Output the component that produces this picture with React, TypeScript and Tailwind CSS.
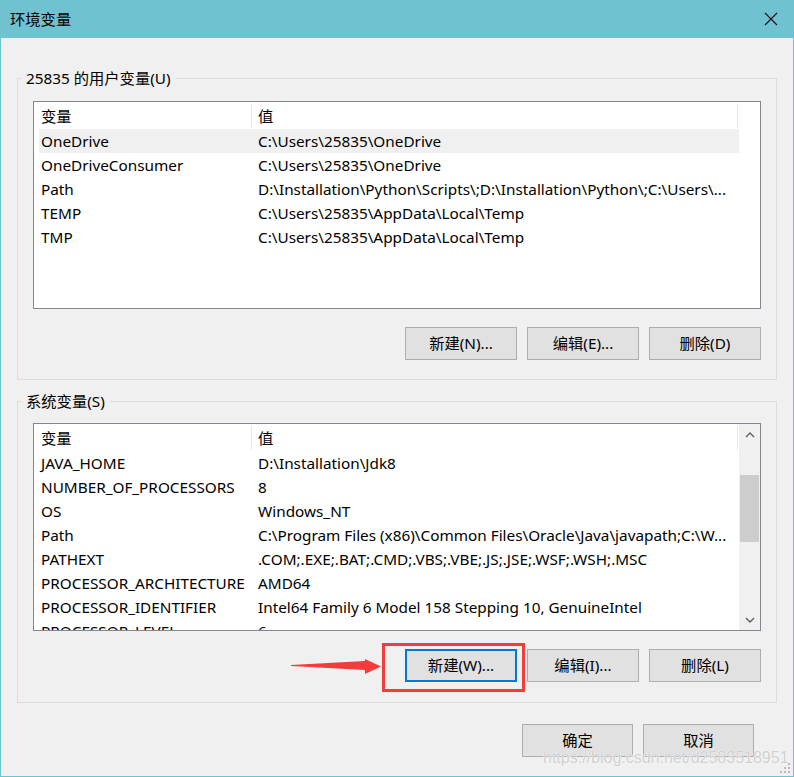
import React from "react";

type Row = { name: string; value: string; selected?: boolean };

const userVars: Row[] = [
  { name: "OneDrive", value: "C:\\Users\\25835\\OneDrive", selected: true },
  { name: "OneDriveConsumer", value: "C:\\Users\\25835\\OneDrive" },
  {
    name: "Path",
    value: "D:\\Installation\\Python\\Scripts\\;D:\\Installation\\Python\\;C:\\Users\\...",
  },
  { name: "TEMP", value: "C:\\Users\\25835\\AppData\\Local\\Temp" },
  { name: "TMP", value: "C:\\Users\\25835\\AppData\\Local\\Temp" },
];

const systemVars: Row[] = [
  { name: "JAVA_HOME", value: "D:\\Installation\\Jdk8" },
  { name: "NUMBER_OF_PROCESSORS", value: "8" },
  { name: "OS", value: "Windows_NT" },
  {
    name: "Path",
    value: "C:\\Program Files (x86)\\Common Files\\Oracle\\Java\\javapath;C:\\W...",
  },
  { name: "PATHEXT", value: ".COM;.EXE;.BAT;.CMD;.VBS;.VBE;.JS;.JSE;.WSF;.WSH;.MSC" },
  { name: "PROCESSOR_ARCHITECTURE", value: "AMD64" },
  { name: "PROCESSOR_IDENTIFIER", value: "Intel64 Family 6 Model 158 Stepping 10, GenuineIntel" },
  { name: "PROCESSOR_LEVEL", value: "6" },
];

function Header() {
  return (
    <div className="flex h-[27px] shrink-0 items-center bg-white">
      <div className="w-[217px] shrink-0 pl-[7px]">变量</div>
      <div className="flex h-[24px] w-[487px] shrink-0 items-center border-x border-[#e5e5e5] pl-[6px]">
        值
      </div>
    </div>
  );
}

function VarRows({ rows }: { rows: Row[] }) {
  return (
    <div className="flex flex-col">
      {rows.map((r) => (
        <div
          key={r.name}
          className={`ml-[5px] flex h-[24px] w-[700px] shrink-0 items-center whitespace-nowrap ${
            r.selected ? "bg-[#f0f0f0]" : ""
          }`}
        >
          <div className="w-[212px] shrink-0 overflow-hidden pl-[2px]">{r.name}</div>
          <div className="flex-1 overflow-hidden pl-[7px]">{r.value}</div>
        </div>
      ))}
    </div>
  );
}

function Chevron({ down }: { down?: boolean }) {
  return (
    <svg width="10" height="6" viewBox="0 0 10 6">
      <path
        d={down ? "M1 1 L5 5 L9 1" : "M1 5 L5 1 L9 5"}
        fill="none"
        stroke="#606060"
        strokeWidth="1.4"
      />
    </svg>
  );
}

function Button({
  children,
  focused,
  wide,
}: {
  children: React.ReactNode;
  focused?: boolean;
  wide?: boolean;
}) {
  return (
    <button
      className={`flex h-[33px] items-center justify-center bg-[#e1e1e1] pb-px ${
        wide ? "w-[112px]" : "w-[111px]"
      } ${focused ? "border-2 border-[#0078d7]" : "border border-[#adadad]"}`}
    >
      {children}
    </button>
  );
}

export default function App() {
  return (
    <div className="relative flex h-[777px] w-[794px] flex-col border-x border-b border-[#71c2d1] bg-[#f0f0f0] font-['Noto_Sans','Noto_Sans_CJK_SC',sans-serif] text-[15.3px] leading-[20px] text-black">
      {/* title bar */}
      <div className="flex h-[38px] shrink-0 items-center justify-between bg-[#71c2d1] pl-[9px] pr-[15px]">
        <span>环境变量</span>
        <svg width="14" height="14" viewBox="0 0 14 14">
          <path d="M1 1 L13 13 M13 1 L1 13" stroke="#111" strokeWidth="1.1" />
        </svg>
      </div>

      <div className="flex flex-col px-[16px]">
        {/* user variables */}
        <fieldset className="mt-[30px] border border-[#dcdcdc] px-[15px] pb-[19px] pt-[13px]">
          <legend className="ml-[-12px] px-[5px] leading-[20px]">25835 的用户变量(U)</legend>
          <div className="flex h-[208px] flex-col overflow-hidden border border-[#828790] bg-white">
            <Header />
            <VarRows rows={userVars} />
          </div>
          <div className="mt-[18px] flex justify-end gap-[10px]">
            <Button wide>新建(N)...</Button>
            <Button wide>编辑(E)...</Button>
            <Button wide>删除(D)</Button>
          </div>
        </fieldset>

        {/* system variables */}
        <fieldset className="mt-[11px] border border-[#dcdcdc] px-[15px] pb-[20px] pt-[12px]">
          <legend className="ml-[-12px] px-[5px] leading-[20px]">系统变量(S)</legend>
          <div className="flex h-[208px] overflow-hidden border border-[#828790] bg-white">
            <div className="flex w-[705px] shrink-0 flex-col overflow-hidden">
              <Header />
              <VarRows rows={systemVars} />
            </div>
            <div className="flex w-[21px] flex-col bg-[#f0f0f0]">
              <div className="flex h-[21px] items-center justify-center">
                <Chevron />
              </div>
              <div className="flex-1 px-px pt-[30px]">
                <div className="h-[67px] bg-[#cdcdcd]" />
              </div>
              <div className="flex h-[21px] items-center justify-center">
                <Chevron down />
              </div>
            </div>
          </div>
          <div className="mt-[18px] flex justify-end gap-[10px]">
            <Button wide focused>
              新建(W)...
            </Button>
            <Button wide>编辑(I)...</Button>
            <Button wide>删除(L)</Button>
          </div>
        </fieldset>

        <div className="mr-[23px] mt-[21px] flex justify-end gap-[10px]">
          <Button>确定</Button>
          <Button>取消</Button>
        </div>
      </div>

      {/* annotation: red highlight and arrow */}
      <div className="absolute left-[381px] top-[643px] h-[49px] w-[143px] border-[3px] border-[#f53b3b]" />
      <svg className="absolute left-[289px] top-[655px]" width="93" height="22" viewBox="0 0 93 22">
        <polygon points="1,10 75,6 75,4 91,11.5 75,19 75,15 1,11" fill="#f53b3b" />
      </svg>

      {/* watermark */}
      <div className="absolute left-[542px] top-[748px] font-['Liberation_Sans',sans-serif] text-[16px] leading-[20px] text-[#cfcfcf] [text-shadow:0_0_1px_#ffffff,0_0_1px_#ffffff]">
        https://blog.csdn.net/d2583518951
      </div>

      {/* size grip */}
      <svg className="absolute bottom-[3px] right-[3px]" width="10" height="10" viewBox="0 0 10 10">
        <rect x="8" y="0" width="2" height="2" fill="#bcbcbc" />
        <rect x="4" y="4" width="2" height="2" fill="#bcbcbc" />
        <rect x="8" y="4" width="2" height="2" fill="#bcbcbc" />
        <rect x="0" y="8" width="2" height="2" fill="#bcbcbc" />
        <rect x="4" y="8" width="2" height="2" fill="#bcbcbc" />
        <rect x="8" y="8" width="2" height="2" fill="#bcbcbc" />
      </svg>
    </div>
  );
}
